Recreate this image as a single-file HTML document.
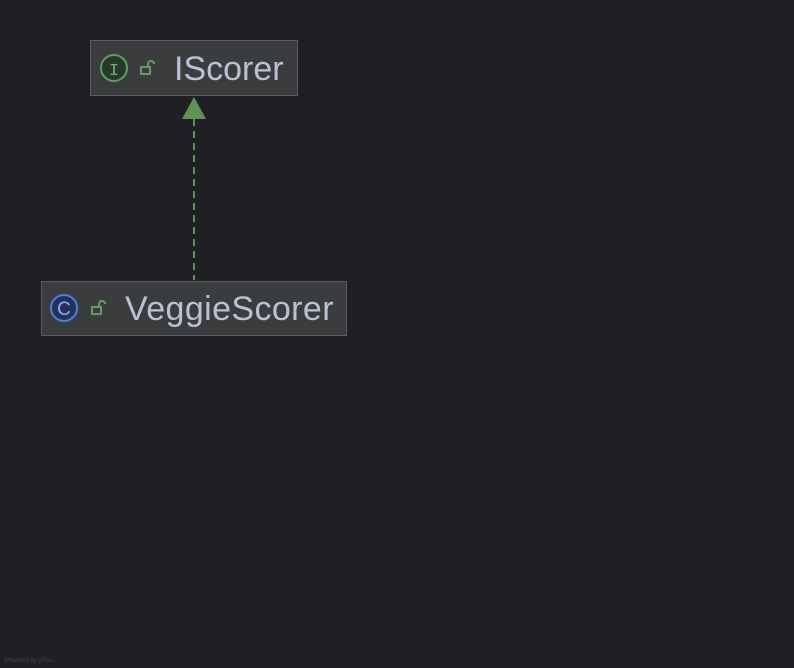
<!DOCTYPE html>
<html><head><style>
body{margin:0;width:794px;height:668px;background:#1f2023;position:relative;overflow:hidden;font-family:"Liberation Sans",sans-serif}
.box{position:absolute;background:#3b3c3d;border:1px solid #5c5d5e;box-sizing:border-box}
.t{position:absolute;color:#b7c3d3;font-size:34px;line-height:1;letter-spacing:0.4px}
</style></head><body>
<div class="box" style="left:90px;top:40px;width:208px;height:56px"></div>
<div class="box" style="left:41px;top:281px;width:306px;height:55px"></div>
<svg width="794" height="668" style="position:absolute;left:0;top:0">
<line x1="194" y1="119" x2="194" y2="280" stroke="#5f9255" stroke-width="2" stroke-dasharray="7,5"/>
<polygon points="194,97 182,119 206,119" fill="#5f9255"/>
<circle cx="114" cy="68" r="13" fill="#253a28" stroke="#5f9e5f" stroke-width="2"/>
<text x="114" y="75" text-anchor="middle" font-family="Liberation Mono" font-size="17" fill="#6fb26f">I</text>
<rect x="141" y="67" width="9" height="7" fill="none" stroke="#5f9e5f" stroke-width="2"/>
<path d="M148 67 v-3 a3 3 0 0 1 6 0" fill="none" stroke="#5f9e5f" stroke-width="2"/>
<circle cx="64" cy="308" r="13" fill="#23325a" stroke="#4d7fe0" stroke-width="2"/>
<text x="64" y="315" text-anchor="middle" font-family="Liberation Sans" font-size="19" fill="#8cb0f0">C</text>
<rect x="92" y="307" width="9" height="7" fill="none" stroke="#5f9e5f" stroke-width="2"/>
<path d="M99 307 v-3 a3 3 0 0 1 6 0" fill="none" stroke="#5f9e5f" stroke-width="2"/>
<text x="5" y="662" font-size="6" fill="#444" font-family="Liberation Sans">Powered by yFiles</text>
</svg>
<div class="t" style="left:174px;top:52px;letter-spacing:0">IScorer</div>
<div class="t" style="left:125px;top:292px">VeggieScorer</div>
</body></html>
